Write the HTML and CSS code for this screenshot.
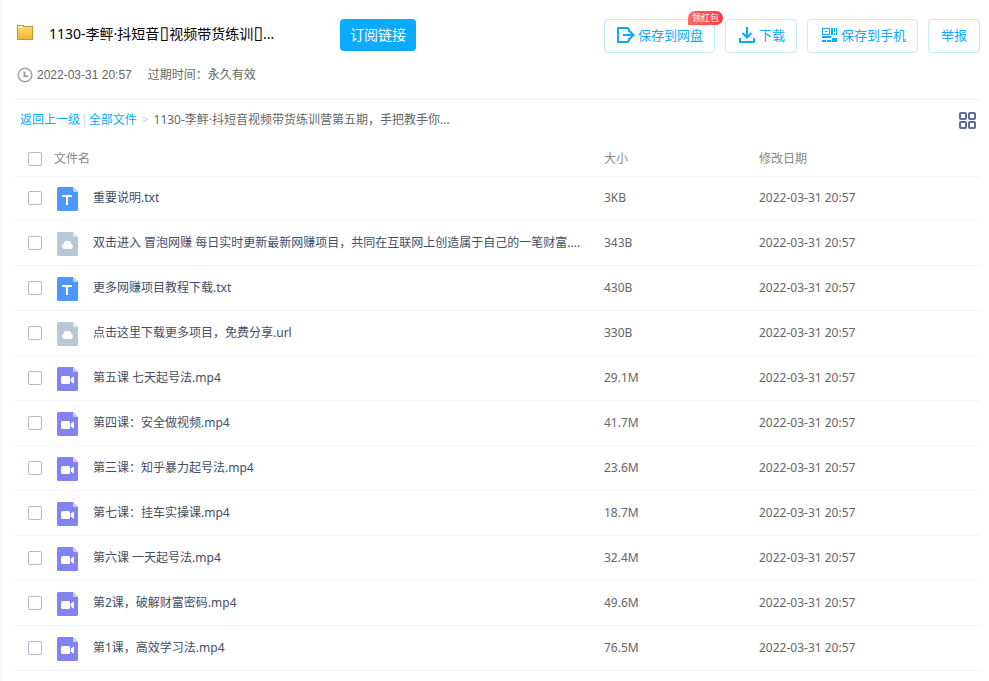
FILE: index.html
```html
<!DOCTYPE html>
<html lang="zh-CN">
<head>
  <meta charset="UTF-8" />
  <meta name="viewport" content="width=device-width, initial-scale=1.0"/>
  <title>文件分享</title>
  <link rel="stylesheet" href="styles.css">
</head>
<body>

  <!-- file type icons -->
  <svg class="sprite" aria-hidden="true">
    <symbol id="icon-txt" viewBox="0 -2 21 26">
      <path fill="#4d97ff" d="M1.500 0H16l5 5v17.500a1.500 1.500 0 0 1-1.500 1.500h-18A1.500 1.500 0 0 1 0 22.500v-21A1.500 1.500 0 0 1 1.500 0z"/>
      <path fill="#b8d5ff" d="M16 0l5 5h-4a1 1 0 0 1-1-1z"/>
      <path fill="#fff" d="M5 8h10v2h-4v8H9v-8H5z"/>
    </symbol>
    <symbol id="icon-url" viewBox="0 -2 21 26">
      <path fill="#b8c8d6" d="M1.500 0H16l5 5v17.500a1.500 1.500 0 0 1-1.500 1.500h-18A1.500 1.500 0 0 1 0 22.500v-21A1.500 1.500 0 0 1 1.500 0z"/>
      <path fill="#e2e9ef" d="M16 0l5 5h-4a1 1 0 0 1-1-1z"/>
      <path fill="#fff" d="M7.500 17a2.700 2.700 0 0 1-1-5.100 4.100 4.100 0 0 1 8 0A2.700 2.700 0 0 1 13.500 17z"/>
    </symbol>
    <symbol id="icon-video" viewBox="0 -2 21 26">
      <path fill="#8183f1" d="M1.500 0H16l5 5v17.500a1.500 1.500 0 0 1-1.500 1.500h-18A1.500 1.500 0 0 1 0 22.500v-21A1.500 1.500 0 0 1 1.500 0z"/>
      <path fill="#cdcdfa" d="M16 0l5 5h-4a1 1 0 0 1-1-1z"/>
      <rect fill="#fff" x="4" y="9" width="9" height="8" rx="1.500"/>
      <path fill="#fff" d="M17 9.500v7.200L13.700 14.500v-3z"/>
    </symbol>
  </svg>

  <main class="share">
    <header class="share-header">
      <div class="title-row">
        <svg class="folder" viewBox="0 0 16 15" aria-hidden="true">
          <defs>
            <linearGradient id="folderFill" x1="0" y1="0" x2="0" y2="1">
              <stop offset="0" stop-color="#ffd873"/>
              <stop offset="1" stop-color="#f0b62c"/>
            </linearGradient>
          </defs>
          <path fill="#c8962f" d="M0 0h7v1h9v14H0z"/>
          <path fill="#fff3c4" d="M1 1h5v1h9v2H1z"/>
          <path fill="url(#folderFill)" d="M1 3h5l1-1h8v12H1z"/>
        </svg>
        <h1 class="title">1130-李鲆·抖短音<span class="missing">▯</span>视频带货练训<span class="missing">▯</span>...</h1>
        <button type="button" class="btn-subscribe">订阅链接</button>

        <div class="actions">
          <button type="button" class="btn">
            <svg viewBox="0 0 18 18" fill="none" stroke="currentColor" stroke-width="2" aria-hidden="true">
              <path d="M12 6V3.500L10.500 2H1v14h9.500l1.500-1.500V12M6 9h10.500M12.500 5L16.500 9l-4 4"/>
            </svg>
            保存到网盘
            <span class="badge">领红包</span>
          </button>
          <button type="button" class="btn">
            <svg viewBox="0 0 18 18" fill="none" stroke="currentColor" stroke-width="2" aria-hidden="true">
              <path d="M9 1v10M4.500 7L9 11.500 13.500 7M2 12v4h14v-4"/>
            </svg>
            下载
          </button>
          <button type="button" class="btn">
            <svg viewBox="0 0 18 18" fill="currentColor" aria-hidden="true">
              <path fill-rule="evenodd" d="M2 2h8v7H2zM3 3v5h6V3z"/>
              <path d="M5 5h2v1H5zM11 2h2v7h-2zM14 2h1v4h-1zM16 2h1v7h-1zM14 7h1v2h-1zM2 10h9v2H2zM2 14h4v2H2zM7 14h4v2H7zM12 12h5v4h-5z"/>
            </svg>
            保存到手机
          </button>
          <button type="button" class="btn">举报</button>
        </div>
      </div>

      <div class="meta">
        <svg class="clock" viewBox="0 0 16 16" fill="none" stroke="#a3a3a3" stroke-width="1.500" aria-hidden="true">
          <circle cx="8" cy="8" r="6.800"/>
          <path stroke-width="2" d="M7.500 4.500v4.700H11"/>
        </svg>
        <span class="meta-date">2022-03-31 20:57</span>
        <span>过期时间：永久有效</span>
      </div>
    </header>

    <nav class="crumbs">
      <a href="#">返回上一级</a>
      <span class="sep">|</span>
      <a href="#">全部文件</a>
      <span class="sep arrow">&gt;</span>
      <span class="current">1130-李鲆·抖短音视频带货练训营第五期，手把教手你...</span>
      <button type="button" class="btn-grid" aria-label="切换视图">
        <svg viewBox="0 0 18 18" fill="none" stroke="#5d6d99" stroke-width="2" aria-hidden="true">
          <rect x="1" y="2" width="6" height="6" rx="1"/>
          <rect x="10" y="2" width="6" height="6" rx="1"/>
          <rect x="1" y="11" width="6" height="6" rx="1"/>
          <rect x="10" y="11" width="6" height="6" rx="1"/>
        </svg>
      </button>
    </nav>

    <table class="files">
      <thead>
        <tr>
          <th class="col-check"><input type="checkbox" aria-label="全选"></th>
          <th>文件名</th>
          <th class="col-size">大小</th>
          <th class="col-date">修改日期</th>
        </tr>
      </thead>
      <tbody>
        <tr>
          <td class="col-check"><input type="checkbox" id="f1"></td>
          <td><label class="file" for="f1"><svg><use href="#icon-txt"/></svg><span>重要说明.txt</span></label></td>
          <td>3KB</td>
          <td>2022-03-31 20:57</td>
        </tr>
        <tr>
          <td class="col-check"><input type="checkbox" id="f2"></td>
          <td><label class="file" for="f2"><svg><use href="#icon-url"/></svg><span>双击进入 冒泡网赚 每日实时更新最新网赚项目，共同在互联网上创造属于自己的一笔财富....</span></label></td>
          <td>343B</td>
          <td>2022-03-31 20:57</td>
        </tr>
        <tr>
          <td class="col-check"><input type="checkbox" id="f3"></td>
          <td><label class="file" for="f3"><svg><use href="#icon-txt"/></svg><span>更多网赚项目教程下载.txt</span></label></td>
          <td>430B</td>
          <td>2022-03-31 20:57</td>
        </tr>
        <tr>
          <td class="col-check"><input type="checkbox" id="f4"></td>
          <td><label class="file" for="f4"><svg><use href="#icon-url"/></svg><span>点击这里下载更多项目，免费分享.url</span></label></td>
          <td>330B</td>
          <td>2022-03-31 20:57</td>
        </tr>
        <tr>
          <td class="col-check"><input type="checkbox" id="f5"></td>
          <td><label class="file" for="f5"><svg><use href="#icon-video"/></svg><span>第五课 七天起号法.mp4</span></label></td>
          <td>29.1M</td>
          <td>2022-03-31 20:57</td>
        </tr>
        <tr>
          <td class="col-check"><input type="checkbox" id="f6"></td>
          <td><label class="file" for="f6"><svg><use href="#icon-video"/></svg><span>第四课：安全做视频.mp4</span></label></td>
          <td>41.7M</td>
          <td>2022-03-31 20:57</td>
        </tr>
        <tr>
          <td class="col-check"><input type="checkbox" id="f7"></td>
          <td><label class="file" for="f7"><svg><use href="#icon-video"/></svg><span>第三课：知乎暴力起号法.mp4</span></label></td>
          <td>23.6M</td>
          <td>2022-03-31 20:57</td>
        </tr>
        <tr>
          <td class="col-check"><input type="checkbox" id="f8"></td>
          <td><label class="file" for="f8"><svg><use href="#icon-video"/></svg><span>第七课：挂车实操课.mp4</span></label></td>
          <td>18.7M</td>
          <td>2022-03-31 20:57</td>
        </tr>
        <tr>
          <td class="col-check"><input type="checkbox" id="f9"></td>
          <td><label class="file" for="f9"><svg><use href="#icon-video"/></svg><span>第六课 一天起号法.mp4</span></label></td>
          <td>32.4M</td>
          <td>2022-03-31 20:57</td>
        </tr>
        <tr>
          <td class="col-check"><input type="checkbox" id="f10"></td>
          <td><label class="file" for="f10"><svg><use href="#icon-video"/></svg><span>第2课，破解财富密码.mp4</span></label></td>
          <td>49.6M</td>
          <td>2022-03-31 20:57</td>
        </tr>
        <tr>
          <td class="col-check"><input type="checkbox" id="f11"></td>
          <td><label class="file" for="f11"><svg><use href="#icon-video"/></svg><span>第1课，高效学习法.mp4</span></label></td>
          <td>76.5M</td>
          <td>2022-03-31 20:57</td>
        </tr>
      </tbody>
    </table>
  </main>

</body>
</html>
```
FILE: styles.css
```css
:root {
  --blue: #09aaff;
  --blue-border: #c3eaff;
  --text: #424e67;
  --muted: #666666;
  --light: #888888;
  --line: #f2f6fd;
}

* {
  box-sizing: border-box;
}

body {
  margin: 0;
  font-family: "Noto Sans", "Noto Sans CJK SC", sans-serif;
  font-size: 12px;
  line-height: 18px;
  color: var(--muted);
  background: #ffffff;
}

button {
  font-family: inherit;
  cursor: pointer;
}

a {
  color: var(--blue);
  text-decoration: none;
}

.sprite {
  display: none;
}

.share {
  min-height: 100vh;
  padding: 19px 8px 0 10px;
  border-left: 2px solid #f7f7f7;
}

/* header */
.share-header {
  padding-bottom: 15px;
  border-bottom: 1px solid #f4f4f4;
}

.title-row {
  display: flex;
  align-items: flex-start;
  padding: 0 1px 0 5px;
}

.folder {
  width: 16px;
  height: 15px;
  margin: 6px 16px 0 0;
}

.title {
  width: 291px;
  margin: 0;
  font-size: 14px;
  font-weight: normal;
  line-height: 30px;
  color: #000000;
  white-space: nowrap;
}

.missing {
  font-family: "DejaVu Sans", sans-serif;
  font-size: 18px;
  line-height: 18px;
}

.btn-subscribe {
  height: 32px;
  padding: 0 10px 2px;
  border: none;
  border-radius: 4px;
  background: var(--blue);
  color: #ffffff;
  font-size: 14px;
}

.actions {
  display: flex;
  gap: 10px;
  margin-left: auto;
}

.btn {
  position: relative;
  display: flex;
  align-items: center;
  gap: 3px;
  height: 34px;
  padding: 0 11px 2px 12px;
  border: 1px solid var(--blue-border);
  border-radius: 4px;
  background: #ffffff;
  color: var(--blue);
  font-size: 13px;
  line-height: 30px;
  white-space: nowrap;
}

.btn:last-child {
  padding: 0 12px 2px;
}

.btn svg {
  width: 18px;
  height: 18px;
}

.badge {
  position: absolute;
  top: -9px;
  right: -9px;
  padding: 0 4px;
  border-radius: 7px 7px 7px 0;
  background: linear-gradient(90deg, #ff6a5f, #f93a42);
  color: #ffffff;
  font-size: 9px;
  line-height: 14px;
}

.meta {
  display: flex;
  align-items: center;
  margin-top: 13px;
  padding-left: 5px;
}

.clock {
  width: 16px;
  height: 16px;
  margin-right: 4px;
}

.meta-date {
  margin-right: 16px;
  font-family: "Liberation Sans", sans-serif;
}

/* breadcrumb */
.crumbs {
  display: flex;
  align-items: center;
  height: 40px;
  padding: 0 4px 0 8px;
}

.sep {
  margin: 0 1px;
  color: #c3d3f0;
}

.arrow {
  margin: 0 5px;
}

.btn-grid {
  display: flex;
  margin-left: auto;
  padding: 0;
  border: none;
  background: none;
}

.btn-grid svg {
  width: 18px;
  height: 18px;
}

/* file list */
.files {
  width: 100%;
  table-layout: fixed;
  border-collapse: separate;
  border-spacing: 0;
}

.files th,
.files td {
  height: 45px;
  padding: 0;
  border-bottom: 1px solid var(--line);
  text-align: left;
  vertical-align: middle;
}

.files th {
  height: 37px;
  padding-top: 1px;
  color: var(--light);
  font-weight: normal;
}

.files tbody tr:first-child td {
  height: 44px;
  padding-bottom: 1px;
}

.files .col-check {
  width: 42px;
  padding-left: 16px;
}

.col-size {
  width: 155px;
}

.col-date {
  width: 222px;
}

input[type="checkbox"] {
  display: block;
  width: 14px;
  height: 14px;
  margin: 0;
  appearance: none;
  border: 1px solid #aebccd;
  border-radius: 2px;
  background: #ffffff;
}

input[type="checkbox"]:checked {
  border-color: var(--blue);
  background: var(--blue);
}

.file {
  display: flex;
  align-items: center;
  gap: 15px;
  padding: 0 10px 0 3px;
  color: var(--text);
}

.file svg {
  flex: none;
  width: 21px;
  height: 26px;
}

.file span {
  overflow: hidden;
  text-overflow: ellipsis;
  white-space: nowrap;
}
```
